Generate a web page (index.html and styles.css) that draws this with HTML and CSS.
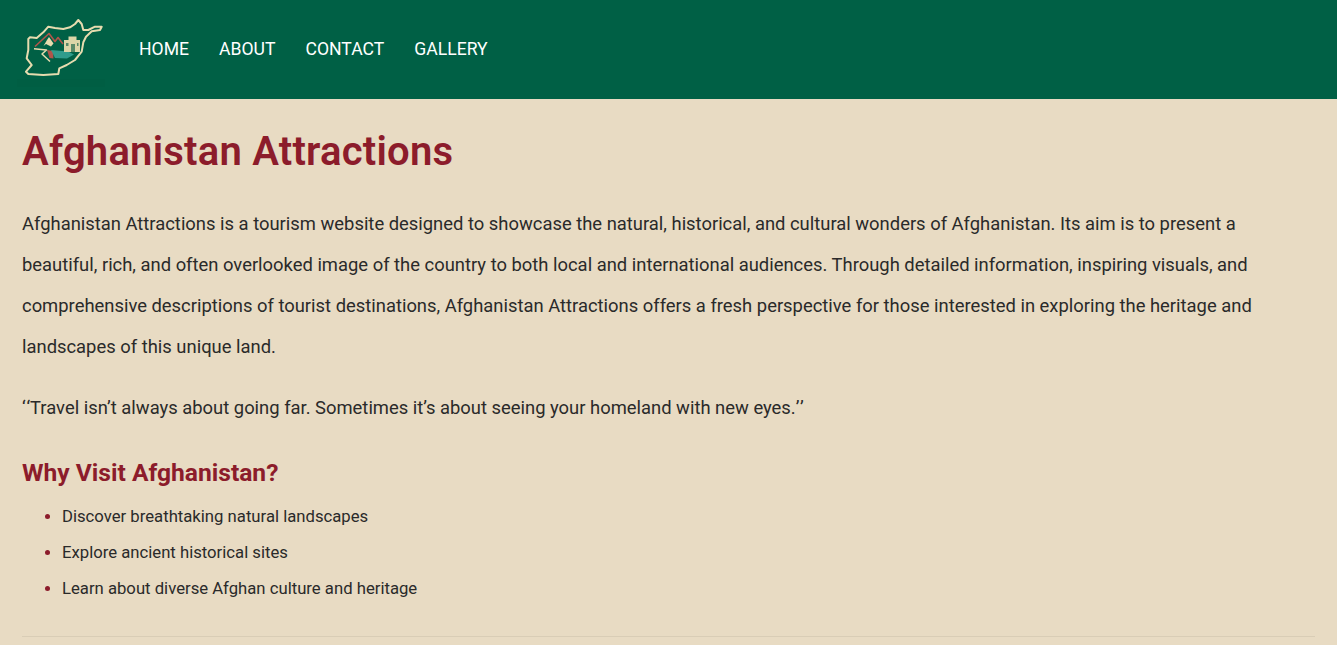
FILE: index.html
```html
<!DOCTYPE html>
<html lang="en">
  <head>
    <meta charset="UTF-8" />
    <meta name="viewport" content="width=device-width, initial-scale=1.0" />
    <title>Afghanistan Attractions</title>
    <link rel="stylesheet" href="styles.css">
  </head>
  <body>
    <header class="navbar">
      <svg class="logo" viewBox="0 0 105 99" role="img" aria-label="Afghanistan Attractions logo">
        <rect x="17" y="79" width="91" height="8" fill="#005e43" />
        <path d="M28.3 39 L30 37.3 L36.7 38 L43.3 32.3 L48.3 26.7 L55 28 L63.3 29 L70 27.3 L75 24 L78.3 20 L81.7 24 L83.3 30 L88.3 30 L95 26.7 L101.7 26.7 L100 30 L91.7 31.3 L86 36.7 L83.3 42.3 L81.7 51.7 L75 60 L66.7 65 L59.3 68.3 L58.3 74 L43.3 75 L28.3 74 L26 71.7 L31.7 65 L26.7 58.3 L28.3 50 Z" fill="none" stroke="#e6dcaf" stroke-width="2" stroke-linejoin="round" />
        <path d="M35 46.5 L49 33.5 L55 41.5 L58 37.5 L63 44" fill="none" stroke="#b0554a" stroke-width="1.6" stroke-linejoin="round" />
        <path d="M49 37 L53.5 43.5 L51 46.5 L46 44 L43.5 46 L47 40 Z" fill="#e6dcaf" />
        <path d="M47 50 L53 51 L53.5 58.5 L49.5 58 Z" fill="#b0554a" />
        <path d="M34 48.7 L46.5 50 L42 54 L50 61.5" fill="none" stroke="#e6dcaf" stroke-width="1.5" stroke-linejoin="round" />
        <path d="M51 50 L68 51.5 L74 54.5 L67 58.5 L55 58 Z" fill="#2f9c8c" />
        <path d="M64 40 L68.5 40 L68.5 36.5 L76.5 36.5 L76.5 40 L80 40 L80 52 L64 52 Z" fill="#dcd6a8" />
        <path d="M71 44 H75 V52 H71 Z M66 43 H68.5 V46 H66 Z M77 43 H78.5 V46 H77 Z" fill="#5a8a68" />
      </svg>
      <nav class="nav-links">
        <a href="#">HOME</a>
        <a href="#">ABOUT</a>
        <a href="#">CONTACT</a>
        <a href="#">GALLERY</a>
      </nav>
    </header>

    <main class="content">
      <h1>Afghanistan Attractions</h1>
      <p>Afghanistan Attractions is a tourism website designed to showcase the natural, historical, and cultural wonders of Afghanistan. Its aim is to present a beautiful, rich, and often overlooked image of the country to both local and international audiences. Through detailed information, inspiring visuals, and comprehensive descriptions of tourist destinations, Afghanistan Attractions offers a fresh perspective for those interested in exploring the heritage and landscapes of this unique land.</p>
      <p><span class="quote-mark">‘</span>‘Travel isn’t always about going far. Sometimes it’s about seeing your homeland with new eyes.<span class="quote-mark">’</span>’</p>
      <h2>Why Visit Afghanistan?</h2>
      <ul>
        <li>Discover breathtaking natural landscapes</li>
        <li>Explore ancient historical sites</li>
        <li>Learn about diverse Afghan culture and heritage</li>
      </ul>
      <hr />
    </main>
  </body>
</html>
```

FILE: styles.css
```css
body {
  font-family: Roboto, Arial, sans-serif;
  background-color: #e8dbc3;
  color: #2a2a2a;
  margin: 0;
}

.navbar {
  background-color: #006045;
  display: flex;
  align-items: center;
  height: 99px;
}

.logo {
  width: 105px;
  height: 99px;
  flex-shrink: 0;
  filter: blur(0.3px);
}

.nav-links {
  display: flex;
  gap: 30px;
  margin-left: 34px;
  margin-bottom: 2px;
}

.nav-links a {
  color: #fff;
  font-size: 17.6px;
  font-weight: 400;
  text-decoration: none;
}

.content {
  padding: 0 22px;
}

h1 {
  color: #8c1c2b;
  font-size: 40px;
  font-weight: 600;
  letter-spacing: 0.22px;
  line-height: 47px;
  margin: 29px 0 0;
}

p {
  font-size: 18.4px;
  line-height: 41px;
  margin: 20px 0 0;
}

h1 + p {
  margin-top: 28px;
}

.quote-mark {
  letter-spacing: 0.7px;
}

h2 {
  color: #8c1c2b;
  font-size: 24.6px;
  font-weight: 700;
  line-height: 28px;
  margin: 31px 0 0;
}

ul {
  margin: 12px 0 0;
  padding-left: 40px;
}

li {
  font-size: 16.7px;
  line-height: 36px;
}

li::marker {
  color: #8c1c2b;
}

hr {
  border: none;
  border-top: 1px solid #d9cdb6;
  margin: 29px 0 0;
}
```
